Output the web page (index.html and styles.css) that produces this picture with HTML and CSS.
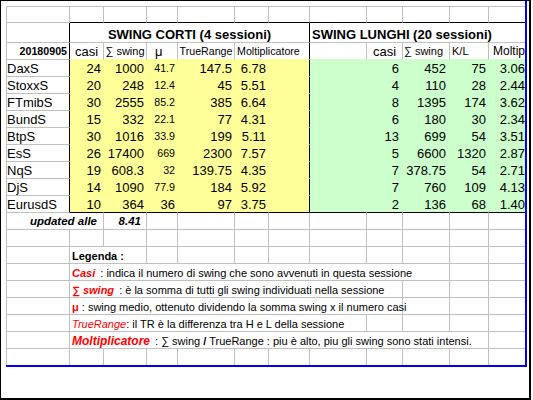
FILE: index.html
```html
<!DOCTYPE html>
<html lang="it">
<head>
<meta charset="utf-8">
<title>Swing</title>
<link rel="stylesheet" href="styles.css">
</head>
<body>
<div class="frame">
  <div class="sheet">
    <div class="grid">
      <!-- row 1 -->
      <div class="c"></div>
      <div class="c kb"></div><div class="c kb"></div><div class="c kb"></div><div class="c kb"></div><div class="c kb"></div><div class="c kb"></div>
      <div class="c kb"></div><div class="c kb"></div><div class="c kb"></div><div class="c kb"></div><div class="c kb nr"></div>
      <!-- row 2 -->
      <div class="c kr"></div>
      <div class="c sp6 kr ctr b">SWING CORTI (4 sessioni)</div>
      <div class="c sp5 nr b">SWING LUNGHI (20 sessioni)</div>
      <!-- row 3 -->
      <div class="c kr r b s">20180905</div>
      <div class="c ctr yb">casi</div>
      <div class="c ctr m yb">∑ swing</div>
      <div class="c yb mu">μ</div>
      <div class="c ctr s yb">TrueRange</div>
      <div class="c sp2 s kr yb">Moltiplicatore</div>
      <div class="c gb"></div>
      <div class="c ctr gb">casi</div>
      <div class="c m gb pl1">∑ swing</div>
      <div class="c m gb">K/L</div>
      <div class="c r m12 gb nr p0">Moltip</div>

      <!-- DaxS -->
      <div class="c kr pl0">DaxS</div>
      <div class="c y r">24</div><div class="c y r">1000</div><div class="c y r s">41.7</div><div class="c y r">147.5</div><div class="c y r">6.78</div><div class="c y kr"></div>
      <div class="c g"></div><div class="c g r p3">6</div><div class="c g r p3">452</div><div class="c g r">75</div><div class="c g r nr p0">3.06</div>
      <!-- StoxxS -->
      <div class="c kr pl0">StoxxS</div>
      <div class="c y r">20</div><div class="c y r">248</div><div class="c y r s">12.4</div><div class="c y r">45</div><div class="c y r">5.51</div><div class="c y kr"></div>
      <div class="c g"></div><div class="c g r p3">4</div><div class="c g r p3">110</div><div class="c g r">28</div><div class="c g r nr p0">2.44</div>
      <!-- FTmibS -->
      <div class="c kr pl0">FTmibS</div>
      <div class="c y r">30</div><div class="c y r">2555</div><div class="c y r s">85.2</div><div class="c y r">385</div><div class="c y r">6.64</div><div class="c y kr"></div>
      <div class="c g"></div><div class="c g r p3">8</div><div class="c g r p3">1395</div><div class="c g r">174</div><div class="c g r nr p0">3.62</div>
      <!-- BundS -->
      <div class="c kr pl0">BundS</div>
      <div class="c y r">15</div><div class="c y r">332</div><div class="c y r s">22.1</div><div class="c y r">77</div><div class="c y r">4.31</div><div class="c y kr"></div>
      <div class="c g"></div><div class="c g r p3">6</div><div class="c g r p3">180</div><div class="c g r">30</div><div class="c g r nr p0">2.34</div>
      <!-- BtpS -->
      <div class="c kr pl0">BtpS</div>
      <div class="c y r">30</div><div class="c y r">1016</div><div class="c y r s">33.9</div><div class="c y r">199</div><div class="c y r">5.11</div><div class="c y kr"></div>
      <div class="c g"></div><div class="c g r p3">13</div><div class="c g r p3">699</div><div class="c g r">54</div><div class="c g r nr p0">3.51</div>
      <!-- EsS -->
      <div class="c kr pl0">EsS</div>
      <div class="c y r">26</div><div class="c y r">17400</div><div class="c y r s">669</div><div class="c y r">2300</div><div class="c y r">7.57</div><div class="c y kr"></div>
      <div class="c g"></div><div class="c g r p3">5</div><div class="c g r p3">6600</div><div class="c g r">1320</div><div class="c g r nr p0">2.87</div>
      <!-- NqS -->
      <div class="c kr pl0">NqS</div>
      <div class="c y r">19</div><div class="c y r">608.3</div><div class="c y r s">32</div><div class="c y r">139.75</div><div class="c y r">4.35</div><div class="c y kr"></div>
      <div class="c g"></div><div class="c g r p3">7</div><div class="c g r p3">378.75</div><div class="c g r">54</div><div class="c g r nr p0">2.71</div>
      <!-- DjS -->
      <div class="c kr pl0">DjS</div>
      <div class="c y r">14</div><div class="c y r">1090</div><div class="c y r s">77.9</div><div class="c y r">184</div><div class="c y r">5.92</div><div class="c y kr"></div>
      <div class="c g"></div><div class="c g r p3">7</div><div class="c g r p3">760</div><div class="c g r">109</div><div class="c g r nr p0">4.13</div>
      <!-- EurusdS -->
      <div class="c kr pl0">EurusdS</div>
      <div class="c y r kb">10</div><div class="c y r kb">364</div><div class="c y r kb">36</div><div class="c y r kb">97</div><div class="c y r kb">3.75</div><div class="c y kr kb"></div>
      <div class="c g kb"></div><div class="c g r p3 kb">2</div><div class="c g r p3 kb">136</div><div class="c g r kb">68</div><div class="c g r nr p0 kb">1.40</div>

      <!-- updated -->
      <div class="c sp2 r bi upd">updated alle</div>
      <div class="c r bi upd2">8.41</div>
      <div class="c"></div><div class="c"></div><div class="c"></div><div class="c"></div><div class="c"></div><div class="c"></div><div class="c"></div><div class="c"></div><div class="c nr"></div>
      <!-- empty -->
      <div class="c"></div><div class="c"></div><div class="c"></div><div class="c"></div><div class="c"></div><div class="c"></div>
      <div class="c"></div><div class="c"></div><div class="c"></div><div class="c"></div><div class="c"></div><div class="c nr"></div>
      <!-- Legenda -->
      <div class="c"></div>
      <div class="c sp2 lg b">Legenda :</div>
      <div class="c"></div><div class="c"></div><div class="c"></div><div class="c"></div><div class="c"></div><div class="c"></div><div class="c"></div><div class="c"></div><div class="c nr"></div>
      <!-- Casi -->
      <div class="c"></div>
      <div class="c sp9 lg"><span><em class="red bi gap">Casi</em> : indica il numero di swing che sono avvenuti in questa sessione</span></div>
      <div class="c"></div><div class="c nr"></div>
      <!-- swing -->
      <div class="c"></div>
      <div class="c sp8 lg"><span><em class="red bi gap">∑ swing</em> : è la somma di tutti gli swing individuati nella sessione</span></div>
      <div class="c"></div><div class="c"></div><div class="c nr"></div>
      <!-- mu -->
      <div class="c"></div>
      <div class="c sp8 lg"><span><b class="red">μ</b> : swing medio, ottenuto dividendo la somma swing x il numero casi</span></div>
      <div class="c"></div><div class="c"></div><div class="c nr"></div>
      <!-- TrueRange -->
      <div class="c"></div>
      <div class="c sp7 lg"><span><em class="red it">TrueRange</em>: il TR è la differenza tra H e L della sessione</span></div>
      <div class="c"></div><div class="c"></div><div class="c"></div><div class="c nr"></div>
      <!-- Moltiplicatore -->
      <div class="c"></div>
      <div class="c sp10 lg"><span><em class="red bi big gap">Moltiplicatore</em> : ∑ swing <b>/</b> TrueRange : piu è alto, piu gli swing sono stati intensi.</span></div>
      <div class="c nr"></div>
      <!-- last empty -->
      <div class="c nb"></div><div class="c nb"></div><div class="c nb"></div><div class="c nb"></div><div class="c nb"></div><div class="c nb"></div>
      <div class="c nb"></div><div class="c nb"></div><div class="c nb"></div><div class="c nb"></div><div class="c nb"></div><div class="c nb nr"></div>
    </div>
  </div>
</div>
</body>
</html>
```

FILE: styles.css
```css
html, body {
  margin: 0;
  padding: 0;
  background: #ffffff;
}

body {
  font-family: "Liberation Sans", Arial, sans-serif;
  color: #000000;
}

.frame {
  box-sizing: border-box;
  width: 531px;
  height: 400px;
  border-style: solid;
  border-color: #000000;
  border-width: 1px 2px 2px 1px;
}

.sheet {
  margin-left: 5px;
  padding-top: 5px;
  width: 519px;
  border-right: 2px solid #0000ff;
  border-bottom: 2px solid #0000ff;
}

.grid {
  display: grid;
  border-top: 1px solid #c0c0c0;
  border-left: 1px solid #c0c0c0;
  grid-template-columns: 63px 34px 43px 31px 57px 34px 41px 57px 36px 47px 39px 36px;
  grid-template-rows: 16px 20px 17px repeat(9, 17px) 17px 17px 17px repeat(5, 17px) 16px;
}

.c {
  box-sizing: border-box;
  display: flex;
  align-items: flex-end;
  justify-content: flex-start;
  white-space: nowrap;
  padding: 0 2px;
  font-size: 13px;
  line-height: 15px;
  border-right: 1px solid #c0c0c0;
  border-bottom: 1px solid #c0c0c0;
  min-width: 0;
}

.r { justify-content: flex-end; }
.ctr { justify-content: center; }

.sp2 { grid-column: span 2; }
.sp5 { grid-column: span 5; }
.sp6 { grid-column: span 6; }
.sp7 { grid-column: span 7; }
.sp8 { grid-column: span 8; }
.sp9 { grid-column: span 9; }
.sp10 { grid-column: span 10; }

.y {
  background: #ffff99;
  border-right-color: #ffff99;
  border-bottom-color: #ffff99;
}

.g {
  background: #ccffcc;
  border-right-color: #ccffcc;
  border-bottom-color: #ccffcc;
}

.yb { border-bottom-color: #ffff99; }
.gb { border-bottom-color: #ccffcc; }

.kr { border-right-color: #000000; }
.kb { border-bottom-color: #000000; }
.nr { border-right: none; }
.nb { border-bottom: none; }

.b { font-weight: bold; }
.bi { font-weight: bold; font-style: italic; }
.it { font-style: italic; }

.s { font-size: 10.67px; }
.m { font-size: 11px; }
.m12 { font-size: 12px; }

.mu { padding-left: 8px; }
.pl0 { padding-left: 0; }
.pl1 { padding-left: 1px; }
.p3 { padding-right: 3px; }
.p0 { padding-right: 0; }

.upd {
  font-size: 11.5px;
  padding-right: 6px;
}

.upd2 {
  font-size: 11.5px;
  padding-right: 5px;
}

.lg {
  font-size: 11px;
  line-height: 13px;
  padding-left: 2px;
}

.red { color: #ff0000; }
.gap { margin-right: 2px; }
.big { font-size: 12px; }

em { font-style: normal; }
em.bi { font-style: italic; }
em.it { font-style: italic; }
```
